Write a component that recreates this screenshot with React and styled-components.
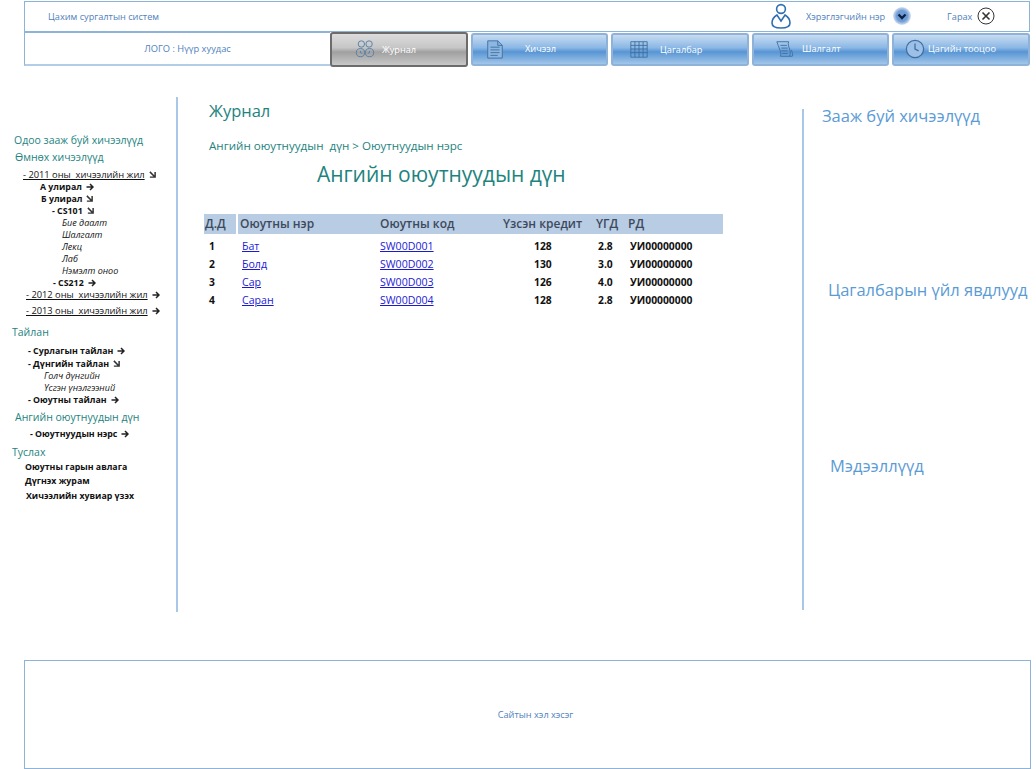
import React from "react";
import styled, { createGlobalStyle } from "styled-components";

const Global = createGlobalStyle`
  html, body { margin: 0; padding: 0; background: #fff; }
  body { font-family: "Open Sans", "Noto Sans", sans-serif; width: 1036px; height: 769px; overflow: hidden; }
`;

const Page = styled.div`
  width: 1036px;
  height: 769px;
  display: flex;
  flex-direction: column;
`;

const TopBar = styled.header`
  margin: 1px 6px 0 24px;
  height: 29px;
  border: 1px solid #8db3d9;
  display: flex;
  align-items: center;
  color: #4f81bd;
  font-size: 9.2px;
`;
const SystemName = styled.span`
  margin-left: 23px;
  flex: 1;
`;
const UserName = styled.span`
  margin-left: 14px;
  width: 87px;
`;
const SignOut = styled.span`
  margin-left: 36px;
  width: 30px;
`;
const IconSlot = styled.span`
  display: flex;
  margin-right: ${(p) => p.$mr || 0}px;
`;

const NavRow = styled.nav`
  margin: 0 6px 0 24px;
  height: 35px;
  display: flex;
  align-items: flex-start;
`;
const Logo = styled.div`
  width: 306px;
  height: 34px;
  border: 1px solid #8db3d9;
  border-right: none;
  border-bottom: 2px solid #b3cde6;
  display: flex;
  align-items: center;
  justify-content: center;
  color: #4f81bd;
  font-size: 9.3px;
  padding-left: 20px;
  box-sizing: border-box;
`;
const Tab = styled.div`
  width: ${(p) => p.$w}px;
  margin-right: ${(p) => p.$gap}px;
  height: ${(p) => (p.$active ? 35 : 33)}px;
  margin-top: ${(p) => (p.$active ? 0 : 1)}px;
  box-sizing: border-box;
  border-radius: 3px;
  border: ${(p) => (p.$active ? "2px solid #6c6c6c" : "2px solid #8fb3d8")};
  background: ${(p) =>
    p.$active
      ? "linear-gradient(#dcdcdc 0%, #c6c6c6 44%, #a0a0a0 58%, #c8c8c8 100%)"
      : "linear-gradient(#c8dcf1 0%, #8ab7e5 44%, #5795d4 58%, #a3c6ea 100%)"};
  color: #fff;
  font-size: 9.2px;
  display: flex;
  align-items: center;
  padding-left: ${(p) => p.$pl}px;
`;
const TabLabel = styled.span`
  margin-left: ${(p) => p.$ml}px;
  position: relative;
  top: ${(p) => p.$dy || 0}px;
  white-space: nowrap;
`;

const Body = styled.div`
  display: flex;
  margin-top: 30px;
  height: 515px;
`;
const Sidebar = styled.aside`
  width: 176px;
  height: 515px;
  flex: none;
  border-right: 2px solid #a9c7e6;
`;
const SideInner = styled.div`
  padding-top: 37px;
`;
const Row = styled.div`
  height: 12px;
  margin-top: ${(p) => p.$mt}px;
  padding-left: ${(p) => p.$x}px;
  display: flex;
  align-items: center;
  gap: 4px;
  white-space: pre;
  font-size: ${(p) => (p.$v === "head" ? "10.5px" : p.$v === "year" ? "9.3px" : p.$v === "bold" ? "8.8px" : "9px")};
  color: ${(p) => (p.$v === "head" ? "#1e8380" : "#111")};
  font-weight: ${(p) => (p.$v === "bold" ? 700 : 400)};
  font-style: ${(p) => (p.$v === "it" ? "italic" : "normal")};
`;
const Under = styled.span`
  text-decoration: underline;
  text-underline-offset: 1px;
`;

const Main = styled.main`
  width: 624px;
  flex: none;
  padding-left: 26px;
  box-sizing: border-box;
`;
const Crumb = styled.div`
  color: #1e8380;
  font-size: ${(p) => p.$s}px;
  margin-left: ${(p) => p.$ml || 5}px;
  margin-top: ${(p) => p.$mt}px;
  line-height: ${(p) => p.$lh}px;
  white-space: pre;
`;
const Table = styled.div`
  margin-top: 26px;
  width: 519px;
`;
const Grid = styled.div`
  display: grid;
  grid-template-columns: 32px 140px 122px 93px 32px 100px;
  align-items: center;
`;
const Head = styled(Grid)`
  height: 20px;
  background: #b8cce4;
  font-size: 12px;
  font-weight: 600;
  color: #3d4a5c;
  margin-bottom: 3px;
`;
const HeadCell = styled.span`
  padding-left: ${(p) => p.$pl ?? 4}px;
  height: 100%;
  display: flex;
  align-items: center;
  white-space: nowrap;
  border-left: ${(p) => (p.$sep ? "2px solid #fff" : "none")};
`;
const DataRow = styled(Grid)`
  height: 18px;
  font-size: 10.3px;
  font-weight: 700;
  color: #111;
`;
const Cell = styled.span`
  padding-left: ${(p) => p.$pl ?? 0}px;
  white-space: nowrap;
`;
const Link = styled.a`
  color: #1a1ad6;
  text-decoration: underline;
  font-weight: 400;
  font-size: 10.6px;
  padding-left: ${(p) => p.$pl}px;
`;

const Right = styled.aside`
  margin-top: 12px;
  height: 501px;
  width: 204px;
  border-left: 2px solid #a9c7e6;
  box-sizing: border-box;
  color: #5b9bd5;
  font-size: 16.5px;
`;
const RightTitle = styled.div`
  margin-left: ${(p) => p.$ml}px;
  padding-top: ${(p) => p.$pt}px;
  line-height: 14px;
  white-space: nowrap;
`;

const Footer = styled.footer`
  margin: 48px 5px 0 24px;
  height: 108px;
  border: 1px solid #8db3d9;
  display: flex;
  align-items: center;
  justify-content: center;
  color: #4f81bd;
  font-size: 9.2px;
  padding-left: 16px;
`;

const iconStroke = "#3f6f9f";
const TI = ({ children, w = 22, h = 22, s = iconStroke }) => (
  <svg width={w} height={h} viewBox="0 0 22 22" fill="none" stroke={s} strokeWidth="1">{children}</svg>
);
const Group = () => (
  <TI w={20} h={20} s="#4f7da8">
    <circle cx="7" cy="5.5" r="3.5" /><circle cx="15.5" cy="5.5" r="3.5" />
    <circle cx="6" cy="15" r="4.5" /><circle cx="16" cy="15" r="4.5" />
    <path d="M6 13v2l2 1M16 13v2l-2 1" />
  </TI>
);
const Doc = () => (
  <TI w={20} h={24}><path d="M3 2h11l5 5v14H3z" fill="#8db6e2" /><path d="M14 2v5h5M6 9h10M6 12h10M6 15h10M6 18h8" /></TI>
);
const Cal = () => (
  <TI w={20} h={20}><path d="M2 3h18v17H2zM2 7h18M2 11h18M2 15h18M6.5 3v17M11 3v17M15.5 3v17" /></TI>
);
const ScrollI = () => (
  <TI w={20} h={24}><path d="M2 3h13c-1 3 0 5 1 8s1 6 0 8H6c1-3 0-5-1-8S3 6 2 3z" /><path d="M6 7h7M7 10h7M7 13h7M8 16h6M16 19h3c1-2 0-4-1-7" /></TI>
);
const Clock = () => (
  <TI w={20} h={20}><circle cx="11" cy="11" r="9.5" strokeWidth="1.4" fill="#9cc0e8" /><path d="M11 5v6l4 2" strokeWidth="1.4" /></TI>
);
const User = () => (
  <svg width="22" height="28" viewBox="0 0 22 28" fill="none" stroke="#2f6fb0" strokeWidth="1.6">
    <circle cx="11" cy="7" r="4.4" />
    <path d="M7 13C3.5 15 2 18 2 21c0 3 3 5 9 5s9-2 9-5c0-3-1.5-6-5-8l-4 6z" />
  </svg>
);
const Drop = () => (
  <svg width="18" height="18" viewBox="0 0 18 18">
    <defs><radialGradient id="dg"><stop offset="0.6" stopColor="#6f9cd6" /><stop offset="1" stopColor="#d5e2f2" /></radialGradient></defs>
    <circle cx="9" cy="9" r="9" fill="url(#dg)" />
    <path d="M5.5 7.5 9 11l3.5-3.5" fill="none" stroke="#0d2340" strokeWidth="2.4" />
  </svg>
);
const CloseI = () => (
  <svg width="18" height="18" viewBox="0 0 18 18" fill="none" stroke="#333" strokeWidth="1">
    <circle cx="9" cy="9" r="8" /><path d="M5.5 5.5l7 7M12.5 5.5l-7 7" strokeWidth="1.6" />
  </svg>
);
const ArrR = () => (
  <svg width="8" height="8" viewBox="0 0 8 8" fill="none" stroke="#222" strokeWidth="1.5"><path d="M0.5 4h6M4 1l3 3-3 3" /></svg>
);
const ArrD = () => (
  <svg width="7" height="7" viewBox="0 0 8 8" fill="none" stroke="#333" strokeWidth="1.7"><path d="M1 1l5.5 5.5M7 1v6H1" /></svg>
);

const side = [
  { m: 0, x: 14, v: "head", t: "Одоо зааж буй хичээлүүд" },
  { m: 5, x: 15, v: "head", t: "Өмнөх хичээлүүд" },
  { m: 6, x: 23, v: "year", t: "- 2011 оны  хичээлийн жил", u: 1, i: "d" },
  { m: 0, x: 40, v: "bold", t: "А улирал", i: "r" },
  { m: 0, x: 41, v: "bold", t: "Б улирал", i: "d" },
  { m: 0, x: 52, v: "bold", t: "- CS101", i: "d" },
  { m: 0, x: 62, v: "it", t: "Бие даалт" },
  { m: 0, x: 62, v: "it", t: "Шалгалт" },
  { m: 0, x: 62, v: "it", t: "Лекц" },
  { m: 0, x: 62, v: "it", t: "Лаб" },
  { m: 0, x: 62, v: "it", t: "Нэмэлт оноо" },
  { m: 0, x: 53, v: "bold", t: "- CS212", i: "r" },
  { m: 0, x: 26, v: "year", t: "- 2012 оны  хичээлийн жил", u: 1, i: "r" },
  { m: 4, x: 26, v: "year", t: "- 2013 оны  хичээлийн жил", u: 1, i: "r" },
  { m: 9, x: 12, v: "head", t: "Тайлан" },
  { m: 7, x: 28, v: "bold", t: "- Сурлагын тайлан", i: "r" },
  { m: 1, x: 28, v: "bold", t: "- Дүнгийн тайлан", i: "d" },
  { m: 0, x: 44, v: "it", t: "Голч дүнгийн" },
  { m: 0, x: 44, v: "it", t: "Үсгэн үнэлгээний" },
  { m: 0, x: 28, v: "bold", t: "- Оюутны тайлан", i: "r" },
  { m: 5, x: 15, v: "head", t: "Ангийн оюутнуудын дүн" },
  { m: 5, x: 30, v: "bold", t: "- Оюутнуудын нэрс", i: "r" },
  { m: 6, x: 12, v: "head", t: "Туслах" },
  { m: 3, x: 25, v: "bold", t: "Оюутны гарын авлага" },
  { m: 2, x: 25, v: "bold", t: "Дүгнэх журам" },
  { m: 3, x: 26, v: "bold", t: "Хичээлийн хувиар үзэх" },
];

const students = [
  ["1", "Бат", "SW00D001", "128", "2.8"],
  ["2", "Болд", "SW00D002", "130", "3.0"],
  ["3", "Сар", "SW00D003", "126", "4.0"],
  ["4", "Саран", "SW00D004", "128", "2.8"],
];

export default function App() {
  return (
    <Page>
      <Global />
      <TopBar>
        <SystemName>Цахим сургалтын систем</SystemName>
        <IconSlot><User /></IconSlot>
        <UserName>Хэрэглэгчийн нэр</UserName>
        <IconSlot><Drop /></IconSlot>
        <SignOut>Гарах</SignOut>
        <IconSlot $mr={34}><CloseI /></IconSlot>
      </TopBar>
      <NavRow>
        <Logo>ЛОГО : Нүүр хуудас</Logo>
        <Tab $active $w={138} $gap={3} $pl={23}><Group /><TabLabel $ml={7}>Журнал</TabLabel></Tab>
        <Tab $w={137} $gap={3} $pl={12}><Doc /><TabLabel $ml={20} $dy={-1}>Хичээл</TabLabel></Tab>
        <Tab $w={138} $gap={3} $pl={16}><Cal /><TabLabel $ml={11}>Цагалбар</TabLabel></Tab>
        <Tab $w={137} $gap={3} $pl={21}><ScrollI /><TabLabel $ml={7} $dy={-1}>Шалгалт</TabLabel></Tab>
        <Tab $w={138} $gap={0} $pl={11}><Clock /><TabLabel $ml={3} $dy={-1}>Цагийн тооцоо</TabLabel></Tab>
      </NavRow>
      <Body>
        <Sidebar>
          <SideInner>
            {side.map((r, i) => (
              <Row key={i} $mt={r.m} $x={r.x} $v={r.v}>
                {r.u ? <Under>{r.t}</Under> : <span>{r.t}</span>}
                {r.i === "r" && <ArrR />}
                {r.i === "d" && <ArrD />}
              </Row>
            ))}
          </SideInner>
        </Sidebar>
        <Main>
          <Crumb $s={16.5} $mt={3} $lh={22}>Журнал</Crumb>
          <Crumb $s={11.6} $mt={17} $lh={14}>Ангийн оюутнуудын  дүн &gt; Оюутнуудын нэрс</Crumb>
          <Crumb $s={21} $ml={113} $mt={7} $lh={28}>Ангийн оюутнуудын дүн</Crumb>
          <Table>
            <Head>
              <HeadCell $pl={1}>Д.Д</HeadCell>
              <HeadCell $sep $pl={2}>Оюутны нэр</HeadCell>
              <HeadCell $pl={4}>Оюутны код</HeadCell>
              <HeadCell $pl={5}>Үзсэн кредит</HeadCell>
              <HeadCell $pl={5}>ҮГД</HeadCell>
              <HeadCell $pl={5}>РД</HeadCell>
            </Head>
            {students.map((s) => (
              <DataRow key={s[0]}>
                <Cell $pl={5}>{s[0]}</Cell>
                <Cell><Link href="#" $pl={6}>{s[1]}</Link></Cell>
                <Cell><Link href="#" $pl={4}>{s[2]}</Link></Cell>
                <Cell $pl={36}>{s[3]}</Cell>
                <Cell $pl={7}>{s[4]}</Cell>
                <Cell $pl={7}>УИ00000000</Cell>
              </DataRow>
            ))}
          </Table>
        </Main>
        <Right>
          <RightTitle $ml={18} $pt={0}>Зааж буй хичээлүүд</RightTitle>
          <RightTitle $ml={24} $pt={160}>Цагалбарын үйл явдлууд</RightTitle>
          <RightTitle $ml={26} $pt={162}>Мэдээллүүд</RightTitle>
        </Right>
      </Body>
      <Footer>Сайтын хэл хэсэг</Footer>
    </Page>
  );
}
